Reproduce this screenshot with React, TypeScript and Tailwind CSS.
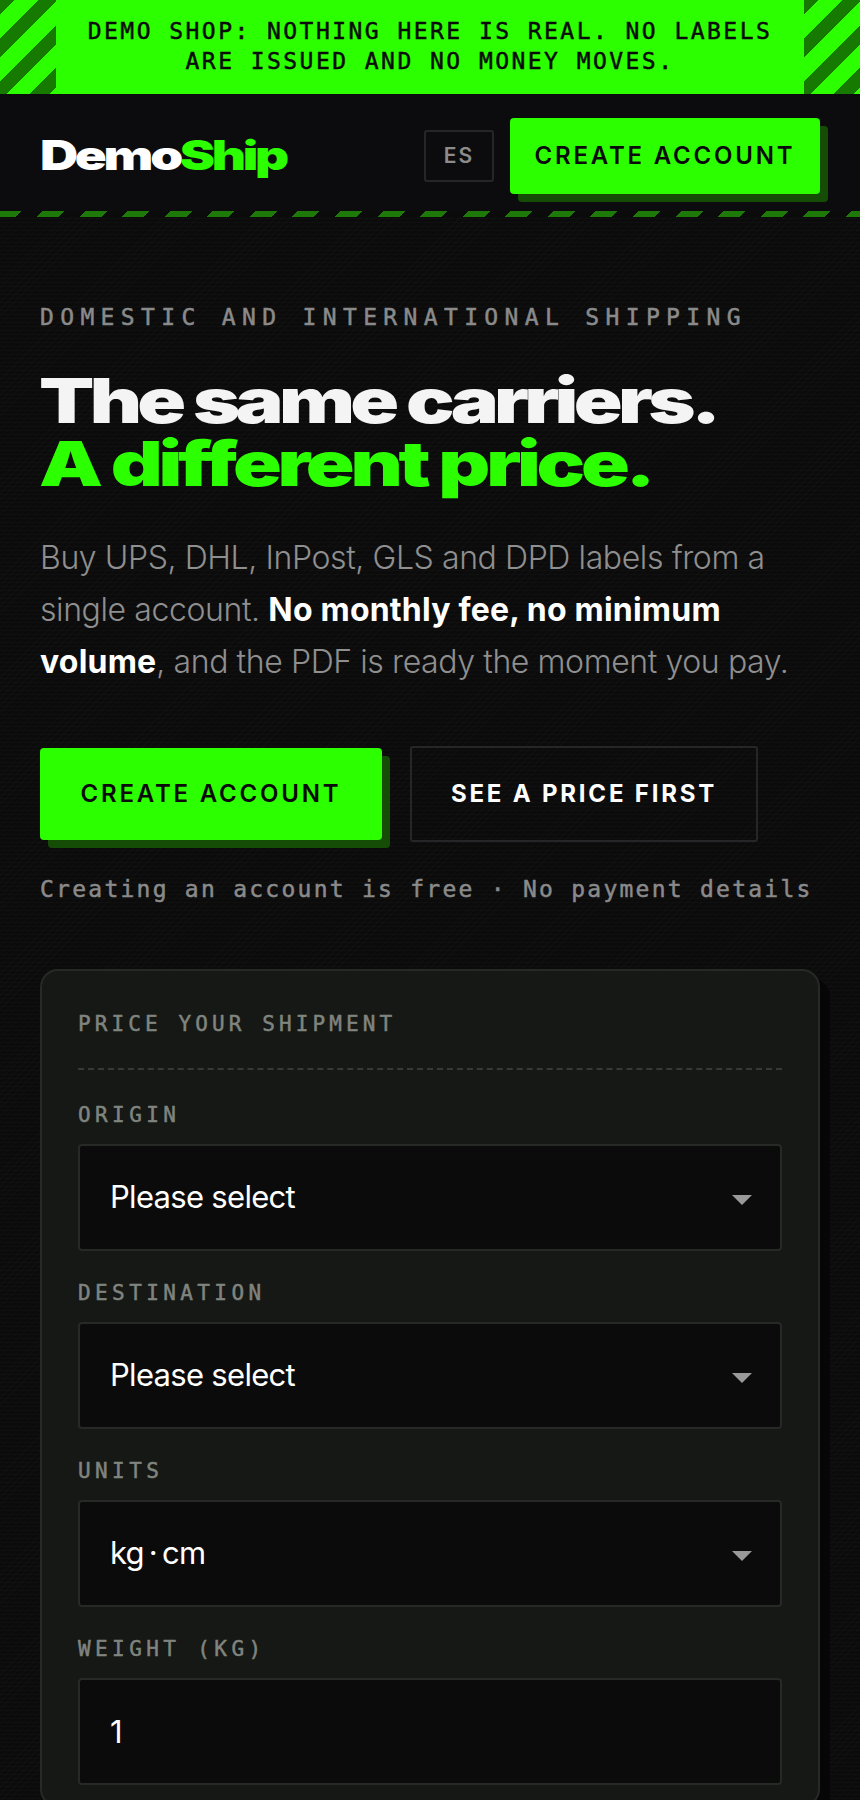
import React from "react";

const SANS = "font-['Inter','Liberation_Sans',sans-serif]";
const MONO = "font-['DejaVu_Sans_Mono','Liberation_Mono',monospace] [-webkit-text-stroke:0.5px_currentColor]";

const FIELDS = [
  { id: "origin", label: "ORIGIN", value: "Please select", options: ["Please select", "Poland", "Spain", "Germany"] },
  { id: "destination", label: "DESTINATION", value: "Please select", options: ["Please select", "Poland", "Spain", "Germany"] },
  { id: "units", label: "UNITS", value: "kg\u2009·\u2009cm", options: ["kg\u2009·\u2009cm", "lb\u2009·\u2009in"] },
];

function FieldLabel({ htmlFor, children }: { htmlFor: string; children: React.ReactNode }) {
  return (
    <label
      htmlFor={htmlFor}
      className={`${MONO} block h-[30px] text-[21px] leading-[30px] tracking-[4.4px] text-[#80847f]`}
    >
      {children}
    </label>
  );
}

export default function App() {
  return (
    <div className={`${SANS} relative h-[1800px] overflow-hidden bg-[#0b0b0c] text-white`}>
      <div className="flex h-[94px] bg-[#2bff00] text-[#0b0b0c]">
        <div className="w-[56px] shrink-0 bg-[repeating-linear-gradient(135deg,#167a00_0,#167a00_10.6px,#2bff00_10.6px,#2bff00_27.2px,#167a00_27.2px,#167a00_30.2px)]" />
        <p className={`${MONO} flex flex-1 items-center pb-[2px] text-center text-[23px] leading-[30px] tracking-[2.45px]`}>
          DEMO SHOP: NOTHING HERE IS REAL. NO LABELS ARE ISSUED AND NO MONEY MOVES.
        </p>
        <div className="w-[56px] shrink-0 bg-[repeating-linear-gradient(135deg,#167a00_0,#167a00_10.6px,#2bff00_10.6px,#2bff00_27.2px,#167a00_27.2px,#167a00_30.2px)]" />
      </div>

      <header className="flex h-[117px] items-center justify-between bg-[#0c0c0e] px-[40px] pt-[6px]">
        <a className="origin-left scale-x-[1.29] text-[41px] font-black leading-none tracking-[-2.6px]">
          Demo<span className="text-[#2bff00]">Ship</span>
        </a>
        <div className="flex items-center gap-[16px]">
          <button className="h-[52px] w-[70px] rounded-[3px] border-2 border-[#262628] text-[21px] font-semibold tracking-[2px] text-[#8c8c8c]">
            ES
          </button>
          <button className="h-[76px] w-[310px] rounded-[4px] bg-[#2bff00] text-[24px] font-semibold tracking-[2.8px] text-[#0b0b0c] shadow-[8px_8px_0_#154d06]">
            CREATE ACCOUNT
          </button>
        </div>
      </header>
      <div className="h-[6px] bg-[repeating-linear-gradient(135deg,#1d7a08_0,#1d7a08_15.5px,transparent_15.5px,transparent_30.1px)]" />

      <main className="bg-[repeating-linear-gradient(0deg,#ffffff05_0,#ffffff05_1px,transparent_1px,transparent_4px),repeating-linear-gradient(135deg,#ffffff03_0,#ffffff03_1px,transparent_1px,transparent_5px)] px-[40px] pt-[85px]">
        <p className={`${MONO} text-[23px] leading-[30px] tracking-[6.35px] text-[#8a8a8a]`}>
          DOMESTIC AND INTERNATIONAL SHIPPING
        </p>

        <h1 className="-ml-px mt-[37px] origin-left scale-x-[1.3] text-[62px] font-black leading-[63px] tracking-[-3.6px] text-[#f4f4f4]">
          The same carriers.
          <br />
          <span className="tracking-[-3.25px] text-[#2bff00]">A different price.</span>
        </h1>

        <p className="mt-[37px] text-[32px] font-light leading-[52px] tracking-[-0.4px] text-[#8f8f8f]">
          Buy UPS, DHL, InPost, GLS and DPD labels from a single account.{" "}
          <strong className="font-bold tracking-[0.2px] text-white">No monthly fee, no minimum volume</strong>, and the PDF is ready the moment you pay.
        </p>

        <div className="mt-[58px] flex items-center gap-[28px]">
          <button className="h-[92px] w-[342px] rounded-[4px] bg-[#2bff00] text-[24px] font-semibold tracking-[2.8px] text-[#0b0b0c] shadow-[8px_8px_0_#154d06]">
            CREATE ACCOUNT
          </button>
          <button className="h-[96px] w-[348px] rounded-[3px] border-2 border-[#262628] text-[24px] font-bold tracking-[2.8px] text-white">
            SEE A PRICE FIRST
          </button>
        </div>

        <p className={`${MONO} mt-[32px] text-[23px] leading-[30px] tracking-[2.25px] text-[#8a8a8a]`}>
          Creating an account is free · No payment details
        </p>

        <section className="mt-[65px] rounded-[18px] border-2 border-[#262926] bg-[#151815] px-[36px] pt-[38px] pb-[20px] shadow-[10px_10px_0_#060606]">
          <h2 className={`${MONO} text-[21px] leading-[30px] tracking-[4.1px] text-[#80847f]`}>
            PRICE YOUR SHIPMENT
          </h2>
          <div className="mt-[29px] mb-[30px] border-t-2 border-dashed border-[#363936]" />

          {FIELDS.map((field) => (
            <div key={field.id} className="mb-[27px]">
              <FieldLabel htmlFor={field.id}>{field.label}</FieldLabel>
              <div className="relative">
                <select
                  id={field.id}
                  defaultValue={field.value}
                  className="mt-[14px] h-[107px] w-full appearance-none rounded-[4px] border-2 border-[#262926] bg-[#0a0b0a] px-[30px] text-[31px] tracking-[-0.7px] text-white"
                >
                  {field.options.map((o) => (
                    <option key={o}>{o}</option>
                  ))}
                </select>
                <span className="absolute right-[30px] top-[65px] h-0 w-0 border-x-[10px] border-t-[10px] border-x-transparent border-t-[#999999]" />
              </div>
            </div>
          ))}

          <FieldLabel htmlFor="weight">WEIGHT (KG)</FieldLabel>
          <input
            id="weight"
            defaultValue="1"
            className="mt-[14px] h-[107px] w-full rounded-[4px] border-2 border-[#262926] bg-[#0a0b0a] px-[30px] text-[31px] text-white"
          />
        </section>
      </main>
    </div>
  );
}
